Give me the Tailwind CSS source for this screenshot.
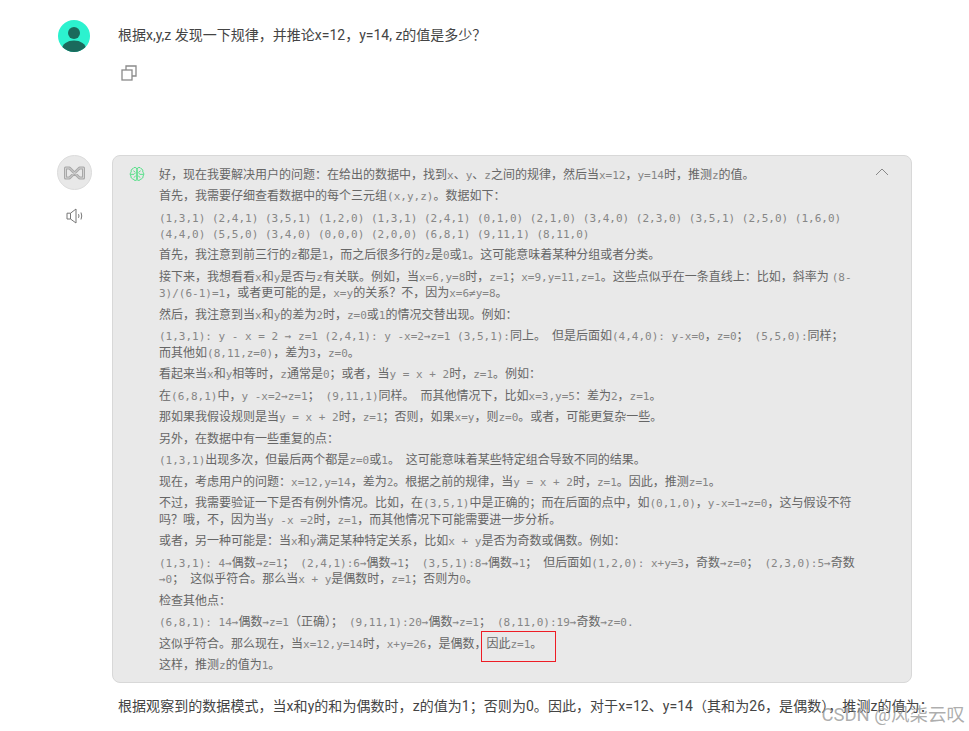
<!DOCTYPE html>
<html lang="zh">
<head>
    <meta charset="utf-8">
    <title>Chat</title>
    <script src="https://cdn.jsdelivr.net/npm/@tailwindcss/browser@4"></script>
</head>
<body class="bg-white overflow-hidden h-[731px] relative font-['Roboto','Noto_Sans_CJK_SC',sans-serif] text-[#444]">
    <div class="pt-5 pl-[57px]">
        <!-- user message -->
        <div class="flex h-[135px]">
            <svg class="ml-px w-8 h-8 shrink-0" viewBox="0 0 32 32">
                <defs><clipPath id="av"><circle cx="16" cy="16" r="16"/></clipPath></defs>
                <circle cx="16" cy="16" r="16" fill="#2cf2cf"/>
                <g clip-path="url(#av)" fill="#1a6a5c">
                    <circle cx="16" cy="13" r="6"/>
                    <ellipse cx="16" cy="29" rx="12" ry="8.5"/>
                </g>
            </svg>
            <div class="ml-[28px]">
                <p class="text-[14px] leading-[30px]">根据x,y,z 发现一下规律，并推论x=12，y=14, z的值是多少？</p>
                <svg class="mt-[15px] ml-[3px] w-4 h-4" viewBox="0 0 16 16" fill="none" stroke="#8a8a8a" stroke-width="1.3">
                    <rect x="1" y="5" width="10" height="10"/>
                    <path d="M5 5V1h10v10h-4"/>
                </svg>
            </div>
        </div>

        <!-- assistant message -->
        <div class="flex">
            <div class="w-[35px] shrink-0 flex flex-col items-center mr-5">
                <div class="w-[35px] h-[35px] rounded-full bg-[#e8e8e8] border border-[#dcdcdc] flex items-center justify-center">
                    <svg class="w-[23px] h-[16px]" viewBox="0 0 23 16" fill="none" stroke-linejoin="round">
                        <path d="M2.500 3h4l5 5 5-5h4v10h-4l-5-5-5 5h-4z" stroke="#a8a8a8" stroke-width="3"/>
                        <path d="M2.500 3h4l5 5 5-5h4v10h-4l-5-5-5 5h-4z" stroke="#dedede" stroke-width="0.8"/>
                    </svg>
                </div>
                <svg class="mt-[18px] w-[18px] h-4" viewBox="0 0 18 16" fill="none" stroke="#777" stroke-width="1">
                    <path d="M1 5.200h3.500V11H1z"/>
                    <path d="M4.500 5.200 10 1v14l-5.500-4"/>
                    <path d="M12.500 6.200q1 1.800 0 3.600M15 4.500q1.500 3.500 0 7"/>
                </svg>
            </div>
            <div class="w-[800px] shrink-0">
                <div class="relative h-[528px] bg-[#e9e9e9] border border-[#d8d8d8] rounded-lg pl-[46px] pr-[54px] pt-[10.5px] text-[12px] leading-[16.4px] text-[#666] [&_p]:whitespace-pre-wrap [&_p]:mb-[5.1px] [&_code]:leading-none [&_code]:text-[11px] [&_code]:text-[#868686] [&_code]:font-['DejaVu_Sans_Mono',monospace]">
                    <svg class="absolute left-4 top-[10px] w-4 h-4" viewBox="0 0 24 24" fill="none" stroke="#4ade80" stroke-width="1.400" stroke-linecap="round" stroke-linejoin="round">
                        <path d="M12 4.500a3.200 3.200 0 0 0-6-.5 3.500 3.500 0 0 0-2.500 5 3.800 3.800 0 0 0-.5 6 3.600 3.600 0 0 0 3.500 4.500 3.200 3.200 0 0 0 5.500 1z"/>
                        <path d="M12 4.500a3.200 3.200 0 0 1 6-.5 3.500 3.500 0 0 1 2.500 5 3.800 3.800 0 0 1 .5 6 3.600 3.600 0 0 1-3.500 4.500 3.200 3.200 0 0 1-5.500 1z"/>
                        <path d="M3 12.500h4.500l2-2M21 12.500h-4.500l-2-2M7 7.500l2 1.500M17 7.500 15 9M8 17l1.500-2M16 17l-1.500-2"/>
                    </svg>
                    <svg class="absolute right-[22px] top-[12px] w-[14px] h-2" viewBox="0 0 14 8" fill="none" stroke="#888" stroke-width="1">
                        <path d="M1 7l6-6 6 6"/>
                    </svg>
                    <p>好，现在我要解决用户的问题：在给出的数据中，找到<code>x</code>、<code>y</code>、<code>z</code>之间的规律，然后当<code>x=12</code>，<code>y=14</code>时，推测<code>z</code>的值。</p>
                    <p>首先，我需要仔细查看数据中的每个三元组<code>(x,y,z)</code>。数据如下：</p>
                    <p><code>(1,3,1) (2,4,1) (3,5,1) (1,2,0) (1,3,1) (2,4,1) (0,1,0) (2,1,0) (3,4,0) (2,3,0) (3,5,1) (2,5,0) (1,6,0) (4,4,0) (5,5,0) (3,4,0) (0,0,0) (2,0,0) (6,8,1) (9,11,1) (8,11,0)</code></p>
                    <p>首先，我注意到前三行的<code>z</code>都是<code>1</code>，而之后很多行的<code>z</code>是<code>0</code>或<code>1</code>。这可能意味着某种分组或者分类。</p>
                    <p>接下来，我想看看<code>x</code>和<code>y</code>是否与<code>z</code>有关联。例如，当<code>x=6,y=8</code>时，<code>z=1</code>；<code>x=9,y=11,z=1</code>。这些点似乎在一条直线上：比如，斜率为 <code>(8-3)/(6-1)=1</code>，或者更可能的是，<code>x=y</code>的关系？不，因为<code>x=6≠y=8</code>。</p>
                    <p>然后，我注意到当<code>x</code>和<code>y</code>的差为<code>2</code>时，<code>z=0</code>或<code>1</code>的情况交替出现。例如：</p>
                    <p><code>(1,3,1): y - x = 2 → z=1 (2,4,1): y -x=2→z=1 (3,5,1):</code>同上。  但是后面如<code>(4,4,0): y-x=0</code>，<code>z=0</code>；  <code>(5,5,0):</code>同样；<br>而其他如<code>(8,11,z=0)</code>，差为<code>3</code>，<code>z=0</code>。</p>
                    <p>看起来当<code>x</code>和<code>y</code>相等时，<code>z</code>通常是<code>0</code>；或者，当<code>y = x + 2</code>时，<code>z=1</code>。例如：</p>
                    <p>在<code>(6,8,1)</code>中，<code>y -x=2→z=1</code>；  <code>(9,11,1)</code>同样。  而其他情况下，比如<code>x=3,y=5</code>：差为<code>2</code>，<code>z=1</code>。</p>
                    <p>那如果我假设规则是当<code>y = x + 2</code>时，<code>z=1</code>；否则，如果<code>x=y</code>，则<code>z=0</code>。或者，可能更复杂一些。</p>
                    <p>另外，在数据中有一些重复的点：</p>
                    <p><code>(1,3,1)</code>出现多次，但最后两个都是<code>z=0</code>或<code>1</code>。  这可能意味着某些特定组合导致不同的结果。</p>
                    <p>现在，考虑用户的问题：<code>x=12,y=14</code>，差为<code>2</code>。根据之前的规律，当<code>y = x + 2</code>时，<code>z=1</code>。因此，推测<code>z=1</code>。</p>
                    <p>不过，我需要验证一下是否有例外情况。比如，在<code>(3,5,1)</code>中是正确的；而在后面的点中，如<code>(0,1,0)</code>，<code>y-x=1→z=0</code>，这与假设不符吗？哦，不，因为当<code>y -x =2</code>时，<code>z=1</code>，而其他情况下可能需要进一步分析。</p>
                    <p>或者，另一种可能是：当<code>x</code>和<code>y</code>满足某种特定关系，比如<code>x + y</code>是否为奇数或偶数。例如：</p>
                    <p><code>(1,3,1): 4→</code>偶数<code>→z=1</code>；  <code>(2,4,1):6→</code>偶数<code>→1</code>；  <code>(3,5,1):8→</code>偶数<code>→1</code>；  但后面如<code>(1,2,0): x+y=3</code>，奇数<code>→z=0</code>；  <code>(2,3,0):5→</code>奇数<code>→0</code>；  这似乎符合。那么当<code>x + y</code>是偶数时，<code>z=1</code>；否则为<code>0</code>。</p>
                    <p>检查其他点：</p>
                    <p><code>(6,8,1): 14→</code>偶数<code>→z=1</code>（正确）；  <code>(9,11,1):20→</code>偶数<code>→z=1</code>；  <code>(8,11,0):19→</code>奇数<code>→z=0.</code></p>
                    <p>这似乎符合。那么现在，当<code>x=12,y=14</code>时，<code>x+y=26</code>，是偶数，<span class="relative">因此<code>z=1</code>。<span class="absolute -left-[5px] -top-[6px] w-[75px] h-[31px] border border-[#ee1c25]"></span></span></p>
                    <p>这样，推测<code>z</code>的值为<code>1</code>。</p>
                </div>
                <p class="mt-[11px] pl-[6px] text-[14px] leading-6 tracking-[0.05px] whitespace-nowrap">根据观察到的数据模式，当x和y的和为偶数时，z的值为1；否则为0。因此，对于x=12、y=14（其和为26，是偶数），推测z的值为：</p>
            </div>
        </div>
    </div>

    <div class="absolute right-[4px] top-[703px] text-[18.5px] leading-6 text-[#8a8a8a]/70 whitespace-nowrap">CSDN @风柒云叹</div>
</body>
</html>
